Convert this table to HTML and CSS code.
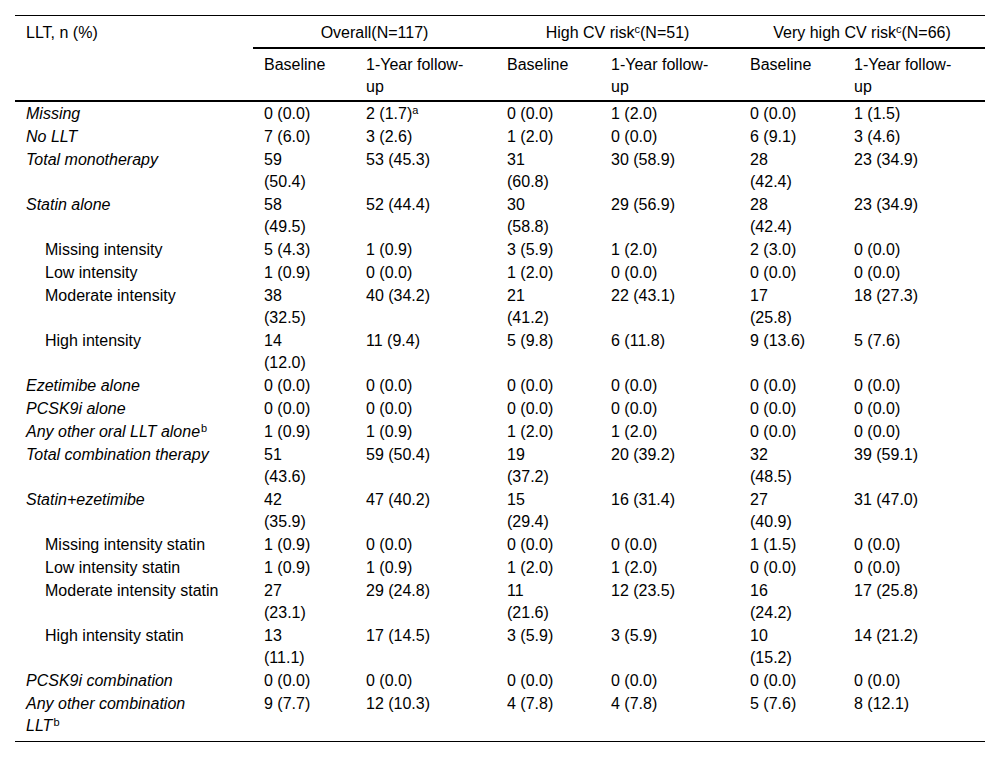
FILE: index.html
```html
<!DOCTYPE html>
<html lang="en">
<head>
<meta charset="utf-8">
<title>LLT table</title>
<link rel="stylesheet" href="styles.css">
</head>
<body>
<div class="page">
<table class="data">
  <colgroup>
    <col class="c-label">
    <col class="c-base1">
    <col class="c-fu1">
    <col class="c-base2">
    <col class="c-fu2">
    <col class="c-base3">
    <col class="c-fu3">
  </colgroup>
  <thead>
    <tr class="group">
      <th class="lab" rowspan="2">LLT, n (%)</th>
      <th class="grp" colspan="2">Overall(N=117)</th>
      <th class="grp" colspan="2">High CV risk<sup>c</sup>(N=51)</th>
      <th class="grp" colspan="2">Very high CV risk<sup>c</sup>(N=66)</th>
    </tr>
    <tr class="sub">
      <th class="b1">Baseline</th>
      <th class="f">1-Year follow-up</th>
      <th class="b2">Baseline</th>
      <th class="f">1-Year follow-up</th>
      <th class="b2">Baseline</th>
      <th class="f">1-Year follow-up</th>
    </tr>
  </thead>
  <tbody>
    <tr><td class="it">Missing</td><td>0 (0.0)</td><td>2 (1.7)<sup>a</sup></td><td>0 (0.0)</td><td>1 (2.0)</td><td>0 (0.0)</td><td>1 (1.5)</td></tr>
    <tr><td class="it">No LLT</td><td>7 (6.0)</td><td>3 (2.6)</td><td>1 (2.0)</td><td>0 (0.0)</td><td>6 (9.1)</td><td>3 (4.6)</td></tr>
    <tr><td class="it">Total monotherapy</td><td>59 (50.4)</td><td>53 (45.3)</td><td>31 (60.8)</td><td>30 (58.9)</td><td>28 (42.4)</td><td>23 (34.9)</td></tr>
    <tr><td class="it">Statin alone</td><td>58 (49.5)</td><td>52 (44.4)</td><td>30 (58.8)</td><td>29 (56.9)</td><td>28 (42.4)</td><td>23 (34.9)</td></tr>
    <tr><td class="ind">Missing intensity</td><td>5 (4.3)</td><td>1 (0.9)</td><td>3 (5.9)</td><td>1 (2.0)</td><td>2 (3.0)</td><td>0 (0.0)</td></tr>
    <tr><td class="ind">Low intensity</td><td>1 (0.9)</td><td>0 (0.0)</td><td>1 (2.0)</td><td>0 (0.0)</td><td>0 (0.0)</td><td>0 (0.0)</td></tr>
    <tr><td class="ind">Moderate intensity</td><td>38 (32.5)</td><td>40 (34.2)</td><td>21 (41.2)</td><td>22 (43.1)</td><td>17 (25.8)</td><td>18 (27.3)</td></tr>
    <tr><td class="ind">High intensity</td><td>14 (12.0)</td><td>11 (9.4)</td><td>5 (9.8)</td><td>6 (11.8)</td><td>9 (13.6)</td><td>5 (7.6)</td></tr>
    <tr><td class="it">Ezetimibe alone</td><td>0 (0.0)</td><td>0 (0.0)</td><td>0 (0.0)</td><td>0 (0.0)</td><td>0 (0.0)</td><td>0 (0.0)</td></tr>
    <tr><td class="it">PCSK9i alone</td><td>0 (0.0)</td><td>0 (0.0)</td><td>0 (0.0)</td><td>0 (0.0)</td><td>0 (0.0)</td><td>0 (0.0)</td></tr>
    <tr><td class="it">Any other oral LLT alone<sup>b</sup></td><td>1 (0.9)</td><td>1 (0.9)</td><td>1 (2.0)</td><td>1 (2.0)</td><td>0 (0.0)</td><td>0 (0.0)</td></tr>
    <tr><td class="it">Total combination therapy</td><td>51 (43.6)</td><td>59 (50.4)</td><td>19 (37.2)</td><td>20 (39.2)</td><td>32 (48.5)</td><td>39 (59.1)</td></tr>
    <tr><td class="it">Statin+ezetimibe</td><td>42 (35.9)</td><td>47 (40.2)</td><td>15 (29.4)</td><td>16 (31.4)</td><td>27 (40.9)</td><td>31 (47.0)</td></tr>
    <tr><td class="ind">Missing intensity statin</td><td>1 (0.9)</td><td>0 (0.0)</td><td>0 (0.0)</td><td>0 (0.0)</td><td>1 (1.5)</td><td>0 (0.0)</td></tr>
    <tr><td class="ind">Low intensity statin</td><td>1 (0.9)</td><td>1 (0.9)</td><td>1 (2.0)</td><td>1 (2.0)</td><td>0 (0.0)</td><td>0 (0.0)</td></tr>
    <tr><td class="ind">Moderate intensity statin</td><td>27 (23.1)</td><td>29 (24.8)</td><td>11 (21.6)</td><td>12 (23.5)</td><td>16 (24.2)</td><td>17 (25.8)</td></tr>
    <tr><td class="ind">High intensity statin</td><td>13 (11.1)</td><td>17 (14.5)</td><td>3 (5.9)</td><td>3 (5.9)</td><td>10 (15.2)</td><td>14 (21.2)</td></tr>
    <tr><td class="it">PCSK9i combination</td><td>0 (0.0)</td><td>0 (0.0)</td><td>0 (0.0)</td><td>0 (0.0)</td><td>0 (0.0)</td><td>0 (0.0)</td></tr>
    <tr class="last"><td class="it">Any other combination LLT<sup>b</sup></td><td>9 (7.7)</td><td>12 (10.3)</td><td>4 (7.8)</td><td>4 (7.8)</td><td>5 (7.6)</td><td>8 (12.1)</td></tr>
  </tbody>
</table>
</div>
</body>
</html>
```

FILE: styles.css
```css
html, body {
  margin: 0;
  padding: 0;
  background: #ffffff;
}

.page {
  padding: 15px;
}

.data {
  width: 970px;
  table-layout: fixed;
  border-collapse: collapse;
  font-family: "Liberation Sans", Arial, sans-serif;
  font-size: 16px;
  line-height: 22px;
  color: #000;
  border-top: 1px solid #000;
  border-bottom: 1px solid #000;
}

.c-label { width: 238px; }
.c-base1 { width: 102px; }
.c-fu1 { width: 141px; }
.c-base2 { width: 104px; }
.c-fu2 { width: 139px; }
.c-base3 { width: 104px; }
.c-fu3 { width: 142px; }

.data th {
  font-weight: normal;
  text-align: left;
  vertical-align: top;
}

.group th {
  padding: 6px 0 3px 0;
}

.group .lab {
  padding: 6px 33px 2px 11px;
  border-bottom: 2px solid #000;
}

.group .grp {
  text-align: center;
  border-bottom: 2px solid #000;
}

.sub th {
  padding: 5px 28px 2px 11px;
  border-bottom: 2px solid #000;
}

.sub .b1 { padding-right: 28.5px; }
.sub .b2 { padding-right: 30.5px; }

.data td {
  vertical-align: top;
  padding: 1px 28px 0 11px;
}

.data td:nth-child(1) { padding-right: 33px; }
.data td:nth-child(2) { padding-right: 28.5px; }
.data td:nth-child(4),
.data td:nth-child(6) { padding-right: 30.5px; }

.data td.it {
  font-style: italic;
}

.data td.ind {
  padding-left: 30px;
}

.data tr.last td {
  padding-bottom: 4px;
}

sup {
  font-size: 11px;
  font-style: normal;
  line-height: 0;
  vertical-align: 5px;
}

.it sup {
  margin-left: 1px;
}
```
